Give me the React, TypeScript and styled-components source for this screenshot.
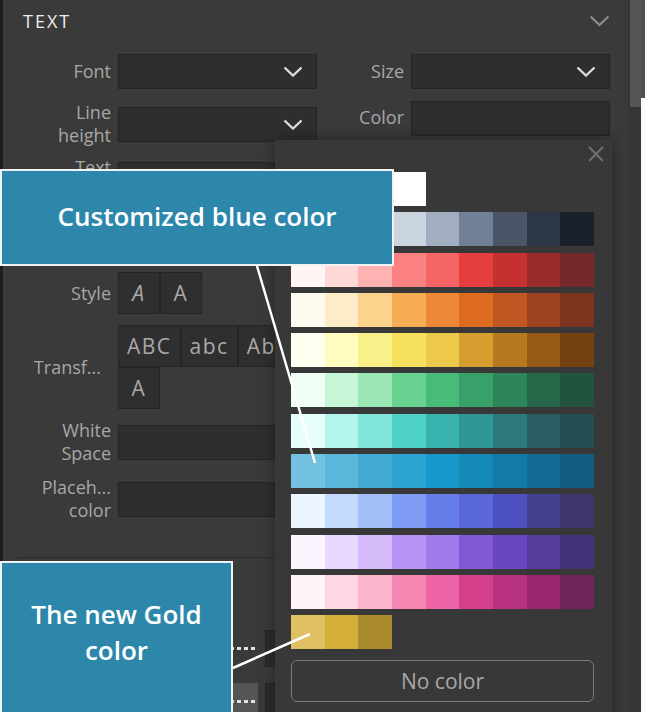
import React from 'react';
import styled, { createGlobalStyle } from 'styled-components';

const GlobalStyle = createGlobalStyle`
  *, *::before, *::after {
    margin: 0;
    padding: 0;
    box-sizing: border-box;
  }
  html, body {
    width: 100%;
    height: 100%;
    background: #3a3a3a;
    overflow: hidden;
  }
  body {
    font-family: 'Open Sans', 'Noto Sans', sans-serif;
  }
`;

const Screen = styled.div`
  position: relative;
  width: 645px;
  height: 712px;
  overflow: hidden;
  display: flex;
`;

const EdgeLine = styled.div`
  width: 3px;
  background: #1c1c1c;
`;

const Panel = styled.div`
  width: 625px;
  background: #3a3a3a;
`;

const ScrollTrack = styled.div`
  width: 13px;
  background: #363636;
  padding-left: 2px;
`;

const ScrollThumb = styled.div`
  width: 11px;
  height: 107px;
  background: #565656;
`;

const PageEdge = styled.div`
  flex: 1;
  background: linear-gradient(#4f4f4f 0 98px, #fafafa 98px);
`;

const Header = styled.div`
  height: 42px;
  display: flex;
  justify-content: space-between;
  align-items: center;
  padding: 0 18px 0 20px;
`;

const Title = styled.span`
  font-size: 18px;
  font-weight: 500;
  letter-spacing: 2px;
  color: #eeeeee;
`;

const Form = styled.div`
  padding-top: 12px;
  padding-right: 18px;
`;

const Row = styled.div<{ $mt?: number; $cols?: string; $minH?: number }>`
  display: grid;
  grid-template-columns: ${p => p.$cols || '108px 1fr'};
  column-gap: 7px;
  align-items: center;
  margin-top: ${p => p.$mt || 0}px;
  min-height: ${p => p.$minH || 0}px;
`;

const Label = styled.div<{ $top?: number; $pr?: number }>`
  font-size: 18px;
  line-height: 23px;
  color: #a7a7a7;
  text-align: right;
  white-space: nowrap;
  align-self: ${p => (p.$top !== undefined ? 'start' : 'center')};
  margin-top: ${p => p.$top || 0}px;
  padding-right: ${p => p.$pr || 0}px;
`;

const Select = styled.div`
  height: 35px;
  display: flex;
  justify-content: flex-end;
  align-items: center;
  padding-right: 13px;
  background: #2e2e2e;
  border: 1px solid #242424;
`;

const InputBox = styled.div<{ $top?: boolean }>`
  height: 35px;
  background: #2e2e2e;
  border: 1px solid #242424;
  align-self: ${p => (p.$top ? 'start' : 'center')};
`;

const Spacer = styled.div<{ $h: number }>`
  height: ${p => p.$h}px;
`;

const ToggleGroup = styled.div`
  display: flex;
  flex-wrap: wrap;
  width: 199px;
`;

const Toggle = styled.div<{ $italic?: boolean }>`
  height: 42px;
  min-width: 42px;
  padding: 0 8px;
  display: flex;
  align-items: center;
  justify-content: center;
  background: #2f2f2f;
  border: 1px solid #242424;
  font-size: 21px;
  letter-spacing: 1.5px;
  color: #a9a9a9;
  font-style: ${p => (p.$italic ? 'italic' : 'normal')};
`;

const Divider = styled.div`
  margin: 35px 0 0 15px;
  height: 1px;
  background: #2b2b2b;
`;

const Track = styled.div<{ $filled?: boolean }>`
  height: 37px;
  display: flex;
  align-items: center;
  background: ${p => (p.$filled ? '#555555' : 'transparent')};
  &::after {
    content: '';
    flex: 1;
    height: 3px;
    background: repeating-linear-gradient(90deg, #e2e2e2 0 4px, transparent 4px 7px);
  }
`;

const ValueBox = styled.div`
  height: 37px;
  background: #2c2c2c;
  border: 1px solid #242424;
`;

const Popover = styled.div`
  position: absolute;
  left: 275px;
  top: 140px;
  width: 337px;
  height: 600px;
  background: #383838;
  box-shadow: 0 0 14px rgba(0, 0, 0, 0.35);
  padding: 32px 18px 0 16px;
  z-index: 2;
`;

const Close = styled.div`
  position: absolute;
  top: 5px;
  right: 7px;
  width: 18px;
  height: 18px;
`;

const Palette = styled.div`
  display: flex;
  flex-direction: column;
  gap: 6.3px;
`;

const SwatchRow = styled.div`
  display: flex;
`;

const Swatch = styled.div<{ $c: string }>`
  width: 33.67px;
  height: 34px;
  background: ${p => p.$c};
`;

const NoColor = styled.div`
  margin-top: 10.5px;
  height: 42px;
  border: 1px solid #7a7a7a;
  border-radius: 6px;
  display: flex;
  align-items: center;
  justify-content: center;
  font-size: 21px;
  color: #a8a8a8;
`;

const Callout = styled.div<{ $top: number; $w: number; $h: number; $pb: number }>`
  position: absolute;
  left: 0;
  top: ${p => p.$top}px;
  width: ${p => p.$w}px;
  height: ${p => p.$h}px;
  background: #2c87aa;
  border: 2px solid #f2f2f2;
  display: flex;
  align-items: center;
  justify-content: center;
  text-align: center;
  padding-bottom: ${p => p.$pb}px;
  font-size: 26px;
  line-height: 36px;
  font-weight: 600;
  color: #ffffff;
  z-index: 3;
`;

const Lines = styled.svg`
  position: absolute;
  left: 0;
  top: 0;
  z-index: 4;
  pointer-events: none;
`;

const Chevron = ({ w = 20, color = '#dcdcdc', sw = 2.4 }: { w?: number; color?: string; sw?: number }) => (
  <svg width={w} height={w * 0.55} viewBox="0 0 20 11">
    <polyline points="1.5,1.5 10,9.5 18.5,1.5" fill="none" stroke={color} strokeWidth={sw} />
  </svg>
);

const palette: string[][] = [
  ['#000000', '#3a3a3a', '#f7fafc', '#ffffff'],
  ['#f7fafc', '#edf2f7', '#e2e8f0', '#cbd5e0', '#a0aec0', '#718096', '#4a5568', '#2d3748', '#1a202c'],
  ['#fff5f5', '#fed7d7', '#feb2b2', '#fc8181', '#f56565', '#e53e3e', '#c53030', '#9b2c2c', '#742a2a'],
  ['#fffaf0', '#feebc8', '#fbd38d', '#f6ad55', '#ed8936', '#dd6b20', '#c05621', '#9c4221', '#7b341e'],
  ['#fffff0', '#fefcbf', '#faf089', '#f6e05e', '#ecc94b', '#d69e2e', '#b7791f', '#975a16', '#744210'],
  ['#f0fff4', '#c6f6d5', '#9ae6b4', '#68d391', '#48bb78', '#38a169', '#2f855a', '#276749', '#22543d'],
  ['#e6fffa', '#b2f5ea', '#81e6d9', '#4fd1c5', '#38b2ac', '#319795', '#2c7a7b', '#285e61', '#234e52'],
  ['#71c1df', '#5ab6da', '#43abd3', '#2ca3d0', '#179acb', '#1589b8', '#1379a6', '#126b93', '#115d80'],
  ['#ebf4ff', '#c3dafe', '#a3bffa', '#7f9cf5', '#667eea', '#5a67d8', '#4c51bf', '#434190', '#3c366b'],
  ['#faf5ff', '#e9d8fd', '#d6bcfa', '#b794f4', '#9f7aea', '#805ad5', '#6b46c1', '#553c9a', '#44337a'],
  ['#fff5f7', '#fed7e2', '#fbb6ce', '#f687b3', '#ed64a6', '#d53f8c', '#b83280', '#97266d', '#702459'],
  ['#e0c062', '#d4af37', '#aa8b2c'],
];

const twoCols = '108px 199px 80px 199px';
const sliderCols = '108px 140px 345px';

export default function App() {
  return (
    <Screen>
      <GlobalStyle />
      <EdgeLine />
      <Panel>
        <Header>
          <Title>TEXT</Title>
          <Chevron w={21} color="#8c8c8c" sw={2} />
        </Header>
        <Form>
          <Row $cols={twoCols}>
            <Label>Font</Label>
            <Select><Chevron /></Select>
            <Label>Size</Label>
            <Select><Chevron /></Select>
          </Row>
          <Row $mt={12} $cols={twoCols}>
            <Label>Line<br />height</Label>
            <Select><Chevron /></Select>
            <Label $top={5}>Color</Label>
            <InputBox $top />
          </Row>
          <Row $mt={9} $minH={46}>
            <Label $top={0}>Text</Label>
            <InputBox />
          </Row>
          <Spacer $h={70} />
          <Row>
            <Label>Style</Label>
            <ToggleGroup>
              <Toggle $italic>A</Toggle>
              <Toggle>A</Toggle>
            </ToggleGroup>
          </Row>
          <Row $mt={11}>
            <Label $pr={10}>Transf...</Label>
            <ToggleGroup>
              <Toggle>ABC</Toggle>
              <Toggle>abc</Toggle>
              <Toggle>Ab</Toggle>
              <Toggle>A</Toggle>
            </ToggleGroup>
          </Row>
          <Row $mt={10}>
            <Label>White<br />Space</Label>
            <InputBox />
          </Row>
          <Row $mt={11}>
            <Label>Placeh...<br />color</Label>
            <InputBox />
          </Row>
          <Divider />
          <Row $mt={72} $cols={sliderCols}>
            <div />
            <Track />
            <ValueBox />
          </Row>
          <Row $mt={16} $cols={sliderCols}>
            <div />
            <Track $filled />
            <ValueBox />
          </Row>
        </Form>
      </Panel>
      <ScrollTrack>
        <ScrollThumb />
      </ScrollTrack>
      <PageEdge />

      <Popover>
        <Close>
          <svg width="18" height="18" viewBox="0 0 18 18">
            <path d="M2 2 L16 16 M16 2 L2 16" stroke="#6e6e6e" strokeWidth="2.2" fill="none" />
          </svg>
        </Close>
        <Palette>
          {palette.map((row, i) => (
            <SwatchRow key={i}>
              {row.map((c, j) => (
                <Swatch key={j} $c={c} />
              ))}
            </SwatchRow>
          ))}
        </Palette>
        <NoColor>No color</NoColor>
      </Popover>

      <Callout $top={169} $w={394} $h={97} $pb={4}>
        Customized blue color
      </Callout>
      <Callout $top={561} $w={233} $h={153} $pb={12}>
        The new Gold<br />color
      </Callout>

      <Lines width="645" height="712">
        <line x1="257" y1="266" x2="315" y2="463" stroke="#ffffff" strokeWidth="2.5" />
        <line x1="233" y1="668" x2="310" y2="634" stroke="#ffffff" strokeWidth="2.5" />
      </Lines>
    </Screen>
  );
}
